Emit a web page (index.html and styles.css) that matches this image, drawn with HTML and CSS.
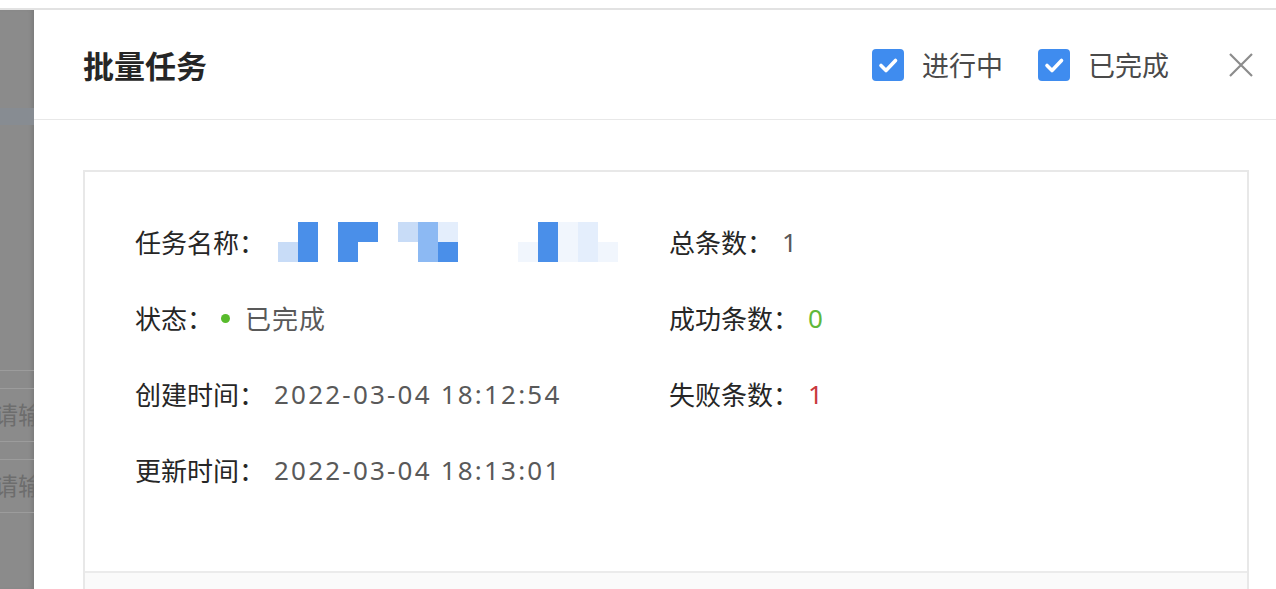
FILE: index.html
```html
<!DOCTYPE html>
<html lang="zh-CN">
<head>
<meta charset="UTF-8">
<meta name="viewport" content="width=device-width, initial-scale=1.0">
<title>批量任务</title>
<link rel="stylesheet" href="styles.css">
</head>
<body>

<div class="topbar"></div>

<div class="main">
  <div class="backdrop">
    <div class="bg-space bg-space-top"></div>
    <div class="bg-band"></div>
    <div class="bg-space bg-space-mid"></div>
    <div class="bg-line"></div>
    <div class="bg-gap"></div>
    <div class="bg-line"></div>
    <div class="bg-row">请输入</div>
    <div class="bg-line"></div>
    <div class="bg-gap"></div>
    <div class="bg-line"></div>
    <div class="bg-row">请输入</div>
    <div class="bg-line"></div>
  </div>

  <div class="drawer">
    <div class="drawer-header">
      <h2 class="drawer-title">批量任务</h2>
      <div class="filters">
        <label class="check">
          <span class="check-box">
            <svg viewBox="0 0 32 32" width="32" height="32"><path d="M9 16.5l5 5 9.5-10" fill="none" stroke="#fff" stroke-width="3.6" stroke-linecap="round" stroke-linejoin="round"/></svg>
          </span>
          <span class="check-label">进行中</span>
        </label>
        <label class="check">
          <span class="check-box">
            <svg viewBox="0 0 32 32" width="32" height="32"><path d="M9 16.5l5 5 9.5-10" fill="none" stroke="#fff" stroke-width="3.6" stroke-linecap="round" stroke-linejoin="round"/></svg>
          </span>
          <span class="check-label">已完成</span>
        </label>
      </div>
      <button class="close" type="button" aria-label="关闭">
        <svg viewBox="0 0 24 24" width="24" height="24"><path d="M1 1L23 23M23 1L1 23" stroke="#8c8c8c" stroke-width="2.2" fill="none"/></svg>
      </button>
    </div>

    <div class="drawer-body">
      <div class="task-card">
        <div class="task-info">
          <div class="field">
            <span class="field-label">任务名称：</span>
            <span class="mosaic">
              <span class="px"></span><span class="px c1"></span><span class="px"></span><span class="px c1"></span><span class="px c1"></span><span class="px"></span><span class="px c3"></span><span class="px c2"></span><span class="px c4"></span><span class="px"></span><span class="px"></span><span class="px"></span><span class="px"></span><span class="px c1"></span><span class="px c5"></span><span class="px c4"></span><span class="px"></span>
              <span class="px c3"></span><span class="px c1"></span><span class="px"></span><span class="px c1"></span><span class="px"></span><span class="px"></span><span class="px"></span><span class="px c2"></span><span class="px c1"></span><span class="px"></span><span class="px"></span><span class="px"></span><span class="px c5"></span><span class="px c1"></span><span class="px c5"></span><span class="px c4"></span><span class="px c5"></span>
            </span>
          </div>
          <div class="field">
            <span class="field-label">总条数：</span>
            <span class="field-value">1</span>
          </div>
          <div class="field">
            <span class="field-label">状态：</span>
            <span class="status-dot"></span>
            <span class="field-value status-text">已完成</span>
          </div>
          <div class="field">
            <span class="field-label">成功条数：</span>
            <span class="field-value success">0</span>
          </div>
          <div class="field">
            <span class="field-label">创建时间：</span>
            <span class="field-value">2022-03-04 18:12:54</span>
          </div>
          <div class="field">
            <span class="field-label">失败条数：</span>
            <span class="field-value fail">1</span>
          </div>
          <div class="field">
            <span class="field-label">更新时间：</span>
            <span class="field-value">2022-03-04 18:13:01</span>
          </div>
        </div>
        <div class="task-footer"></div>
      </div>
    </div>
  </div>
</div>

</body>
</html>
```

FILE: styles.css
```css
html, body {
  margin: 0;
  height: 100%;
  overflow: hidden;
}
body {
  font-family: "Noto Sans", "Noto Sans CJK SC", sans-serif;
  background-color: #fff;
  color: #262626;
}
.topbar {
  height: 8px;
  background-color: #fff;
  border-bottom: 2px solid #e2e2e2;
}
.main {
  display: flex;
  height: calc(100% - 10px);
}

/* masked page behind the drawer */
.backdrop {
  width: 34px;
  flex-shrink: 0;
  background-color: #8b8b8b;
  box-shadow: inset -4px 0 4px -2px rgba(0, 0, 0, 0.12);
  overflow: hidden;
}
.bg-space-top {
  height: 98px;
}
.bg-band {
  height: 17px;
  background-color: #878c92;
}
.bg-space-mid {
  height: 245px;
}
.bg-line {
  height: 1px;
  background-color: #9c9c9c;
}
.bg-gap {
  height: 17px;
}
.bg-row {
  height: 52px;
  line-height: 52px;
  font-size: 24px;
  color: #6d6d6d;
  white-space: nowrap;
  text-indent: -6px;
}

.drawer {
  flex: 1;
  background-color: #fff;
  display: flex;
  flex-direction: column;
}
.drawer-header {
  flex-shrink: 0;
  height: 109px;
  display: flex;
  align-items: center;
  padding: 0 23px 0 49px;
  border-bottom: 1px solid #e8e8e8;
}
.drawer-title {
  margin: 0;
  flex: 1;
  font-size: 31px;
  font-weight: 600;
  color: #262626;
}
.filters {
  display: flex;
  gap: 35px;
  margin-right: 60px;
}
.check {
  display: flex;
  align-items: center;
  gap: 18px;
}
.check-box {
  width: 32px;
  height: 32px;
  border-radius: 4px;
  background-color: #3f8cef;
  display: block;
}
.check-box svg {
  display: block;
}
.check-label {
  font-size: 27px;
  color: #4a4a4a;
}
.close {
  border: none;
  background: none;
  padding: 0;
  width: 24px;
  height: 24px;
  cursor: pointer;
}
.close svg {
  display: block;
}

.drawer-body {
  flex-shrink: 0;
  padding: 50px 27px 0 49px;
}
.task-card {
  border: 2px solid #e8e8e8;
  border-bottom: none;
}
.task-info {
  display: grid;
  grid-template-columns: 534px 1fr;
  grid-auto-rows: 76px;
  padding: 32px 50px 63px;
}
.field {
  display: flex;
  align-items: center;
  font-size: 26px;
  white-space: nowrap;
}
.field-label {
  color: #262626;
}
.field-value {
  color: #595959;
  margin-left: 9px;
  letter-spacing: 2.2px;
}
.status-text {
  margin-left: 0;
  letter-spacing: 1px;
}
.success {
  color: #5fb83a;
}
.fail {
  color: #c9393d;
}
.status-dot {
  width: 9px;
  height: 9px;
  border-radius: 50%;
  background-color: #58bb2c;
  margin: 0 15px 0 8px;
}
.mosaic {
  display: grid;
  grid-template-columns: repeat(17, 20px);
  grid-auto-rows: 20px;
  margin-left: 13px;
}
.px.c1 { background-color: #4a8fe9; }
.px.c2 { background-color: #8cb9f3; }
.px.c3 { background-color: #c8dcf7; }
.px.c4 { background-color: #e4eefc; }
.px.c5 { background-color: #f1f6fd; }
.task-footer {
  height: 30px;
  background-color: #fafafa;
  border-top: 2px solid #ebebeb;
}
```
